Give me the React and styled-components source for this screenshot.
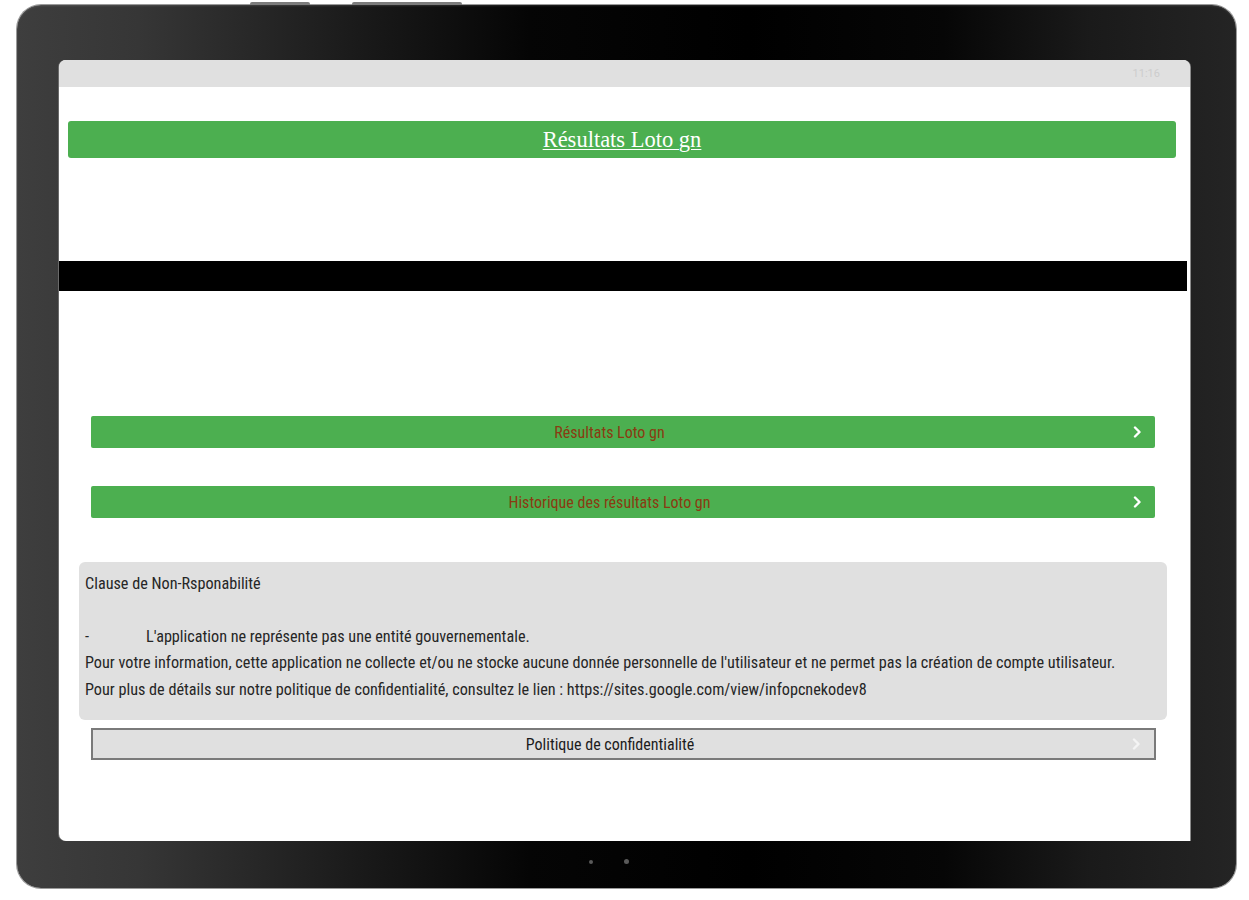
import React from "react";
import styled, { createGlobalStyle } from "styled-components";

const GlobalStyle = createGlobalStyle`
  html, body { margin: 0; padding: 0; background: #ffffff; }
  * { box-sizing: border-box; }
`;

const Stage = styled.div`
  width: 1249px;
  height: 900px;
  padding: 5px 13px 12px 17px;
  background: #ffffff;
`;

const Bezel = styled.div`
  position: relative;
  width: 1219px;
  height: 883px;
  border-radius: 24px;
  padding: 55px 46px 0 42px;
  display: flex;
  flex-direction: column;
  background: linear-gradient(
    90deg,
    #3e3e3e 0%,
    #363636 10%,
    #1a1a1a 28%,
    #050505 42%,
    #000000 60%,
    #060606 76%,
    #1a1a1a 88%,
    #242424 100%
  );
  box-shadow: 0 0 0 1px #9a9a9a, inset 0 1px 2px rgba(255, 255, 255, 0.12);
`;

const EdgeKey = styled.span`
  position: absolute;
  top: -3px;
  left: ${(p) => p.$left}px;
  width: ${(p) => p.$width}px;
  height: 3px;
  border-radius: 2px 2px 0 0;
  background: #7c7c7c;
`;

const Screen = styled.div`
  width: 1131px;
  height: 781px;
  display: flex;
  flex-direction: column;
  background: #ffffff;
  border-radius: 7px 7px 0 7px;
  overflow: hidden;
  box-shadow: 1px 0 0 #8a8a8a, -1px 0 0 #6a6a6a;
`;

const StatusBar = styled.div`
  height: 27px;
  flex: none;
  display: flex;
  align-items: center;
  justify-content: flex-end;
  padding-right: 30px;
  background: #e0e0e0;
  font-family: "Roboto", "Liberation Sans", sans-serif;
  font-size: 11px;
  color: #cdcdcd;
`;

const Header = styled.div`
  margin: 34px 14px 0 9px;
  height: 37px;
  display: flex;
  align-items: center;
  justify-content: center;
  background: #4caf50;
  border-radius: 3px;
`;

const Title = styled.a`
  font-family: "Liberation Serif", "DejaVu Serif", serif;
  font-size: 22.5px;
  color: #ffffff;
  text-decoration: underline;
  text-underline-offset: 2px;
  text-decoration-thickness: 1px;
`;

const Band = styled.div`
  margin: 103px 3px 0 0;
  height: 30px;
  background: #000000;
`;

const Menu = styled.div`
  margin: 125px 35px 0 32px;
  display: flex;
  flex-direction: column;
  gap: 38px;
`;

const MenuButton = styled.div`
  height: 32px;
  display: flex;
  align-items: center;
  background: ${(p) => (p.$plain ? "#e0e0e0" : "#4caf50")};
  border: ${(p) => (p.$plain ? "2px solid #7a7a7a" : "none")};
  border-radius: ${(p) => (p.$plain ? "0" : "2px")};
  font-family: "Liberation Sans Narrow", "Roboto Condensed", "Liberation Sans", sans-serif;
  font-size: 16px;
  color: ${(p) => (p.$plain ? "#1c1c1c" : "#8a3b12")};
`;

const Label = styled.span`
  flex: 1;
  text-align: center;
`;

const ArrowCell = styled.span`
  width: 27px;
  flex: none;
  display: flex;
  align-items: center;
  padding-left: 5px;
`;

const Notice = styled.div`
  margin: 44px 23px 0 20px;
  height: 158px;
  padding: 9px 6px 0 6px;
  background: #e0e0e0;
  border-radius: 6px;
  font-family: "Liberation Sans Narrow", "Roboto Condensed", "Liberation Sans", sans-serif;
  font-size: 16.2px;
  line-height: 26.4px;
  color: #262626;
`;

const Line = styled.div`
  white-space: nowrap;
  min-height: 26.4px;
`;

const Dash = styled.span`
  display: inline-block;
  width: 61px;
`;

const PolicyRow = styled.div`
  margin: 8px 34px 0 32px;
`;

const Chin = styled.div`
  flex: 1;
  display: flex;
  align-items: center;
  gap: 31px;
  padding-left: 530px;
  padding-bottom: 6px;
`;

const Dot = styled.span`
  width: ${(p) => p.$size}px;
  height: ${(p) => p.$size}px;
  border-radius: 50%;
  background: #5a5a5a;
`;

function Arrow({ color }) {
  return (
    <ArrowCell>
      <svg width="9" height="12" viewBox="0 0 9 12" fill="none">
        <path d="M2 1.5 L6.5 6 L2 10.5" stroke={color} strokeWidth="2.4" strokeLinecap="round" strokeLinejoin="round" />
      </svg>
    </ArrowCell>
  );
}

const links = ["Résultats Loto gn", "Historique des résultats Loto gn"];

export default function App() {
  return (
    <>
      <GlobalStyle />
      <Stage>
        <Bezel>
          <EdgeKey $left={233} $width={60} />
          <EdgeKey $left={335} $width={110} />
          <Screen>
            <StatusBar>11:16</StatusBar>
            <Header>
              <Title>Résultats Loto gn</Title>
            </Header>
            <Band />
            <Menu>
              {links.map((label) => (
                <MenuButton key={label}>
                  <Label>{label}</Label>
                  <Arrow color="#ffffff" />
                </MenuButton>
              ))}
            </Menu>
            <Notice>
              <Line>Clause de Non-Rsponabilité</Line>
              <Line />
              <Line>
                <Dash>-</Dash>L'application ne représente pas une entité gouvernementale.
              </Line>
              <Line>
                Pour votre information, cette application ne collecte et/ou ne stocke aucune donnée personnelle de l'utilisateur et ne permet pas la création de compte utilisateur.
              </Line>
              <Line>
                Pour plus de détails sur notre politique de confidentialité, consultez le lien : https://sites.google.com/view/infopcnekodev8
              </Line>
            </Notice>
            <PolicyRow>
              <MenuButton $plain>
                <Label>Politique de confidentialité</Label>
                <Arrow color="#f4f4f4" />
              </MenuButton>
            </PolicyRow>
          </Screen>
          <Chin>
            <Dot $size={4} />
            <Dot $size={5} />
          </Chin>
        </Bezel>
      </Stage>
    </>
  );
}
